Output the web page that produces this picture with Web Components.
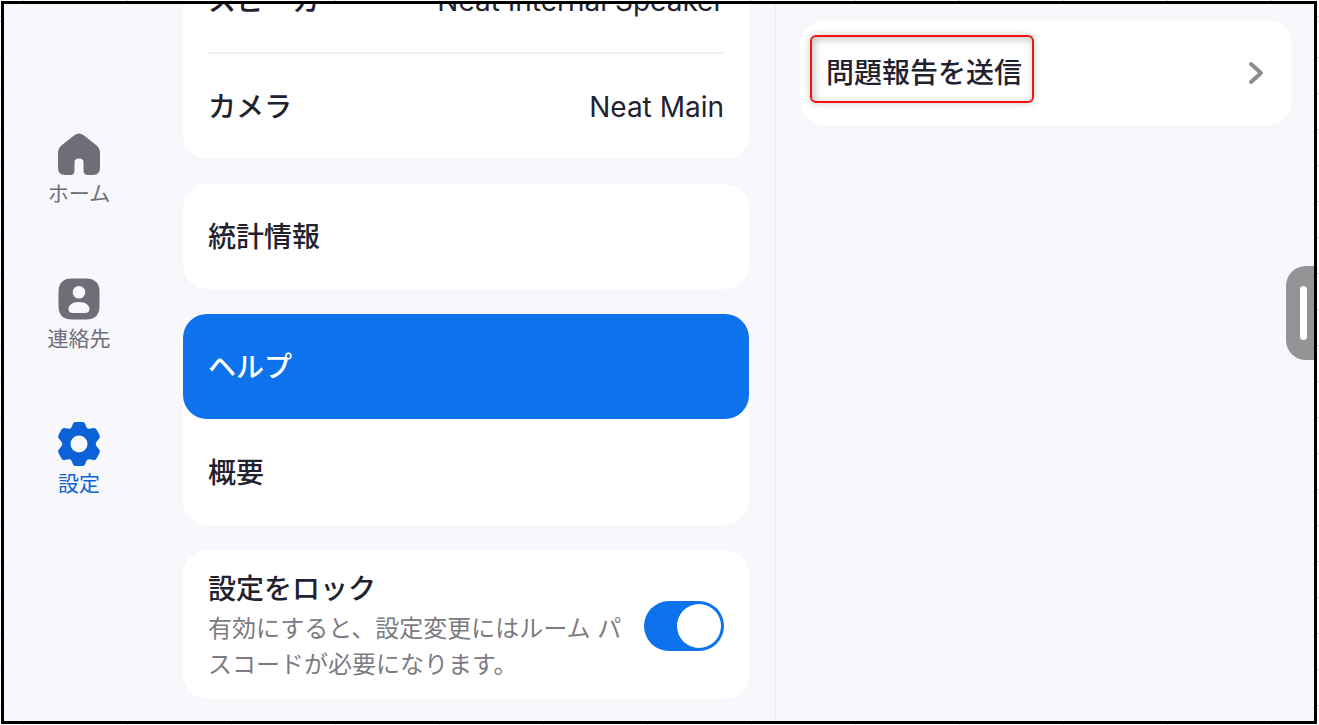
<!DOCTYPE html>
<html lang="ja">
<head>
<meta charset="utf-8">
<meta name="viewport" content="width=device-width, initial-scale=1">
<title>設定</title>
<style>
  :root {
    --bg: #f7f7fc;
    --card: #ffffff;
    --ink: #22222f;
    --muted: #7c7b82;
    --nav: #6e6d78;
    --blue: #0e72ed;
    --nav-active: #0b62d6;
    --line: #f1f1f4;
    --row: 105px;
    --radius: 24px;
  }
  body {
    margin: 0;
    overflow: hidden;
    font-family: Inter, "Noto Sans CJK JP", sans-serif;
    color: var(--ink);
    background:
      repeating-linear-gradient(to bottom, #d4d4d4 0 1px, transparent 1px 36px) 0 21px,
      repeating-linear-gradient(to right, #d4d4d4 0 1px, transparent 1px 104px) 23px 0,
      #fff;
  }
</style>
</head>
<body>
<room-settings>
  <side-nav slot="nav">
    <nav-item icon="home">ホーム</nav-item>
    <nav-item icon="contact">連絡先</nav-item>
    <nav-item icon="gear" active>設定</nav-item>
  </side-nav>
  <card-group slot="list">
    <setting-row value="Neat Internal Speaker">スピーカー</setting-row>
    <setting-row value="Neat Main" divided>カメラ</setting-row>
  </card-group>
  <card-group slot="list"><setting-row>統計情報</setting-row></card-group>
  <card-group slot="list">
    <setting-row selected>ヘルプ</setting-row>
    <setting-row>概要</setting-row>
  </card-group>
  <card-group slot="list">
    <toggle-row>設定をロック<span slot="hint">有効にすると、設定変更にはルーム パスコードが必要になります。</span></toggle-row>
  </card-group>
  <card-group slot="detail"><setting-row marked chevron>問題報告を送信</setting-row></card-group>
  <drawer-handle slot="handle"></drawer-handle>
</room-settings>

<script>
const attach = (el, html) => { el.attachShadow({ mode: 'open' }).innerHTML = html; };

customElements.define('room-settings', class extends HTMLElement {
  connectedCallback() {
    attach(this, `
      <style>
        :host {
          position: relative;
          display: grid;
          grid-template-columns: 154px minmax(0, 618fr) minmax(0, 538fr);
          box-sizing: border-box;
          height: calc(100vh - 2px);
          margin: 1px 2px 1px 1px;
          border: 3px solid #000;
          background: var(--bg);
          overflow: hidden;
        }
        main, aside { display: flex; flex-direction: column; gap: 25px; min-height: 0; overflow: hidden; }
        main { justify-content: flex-end; padding: 0 26px 22px 25px; border-right: 1px solid #e9e9f0; }
        aside { padding: 16px 22px 0 25px; }
      </style>
      <slot name="nav"></slot>
      <main><slot name="list"></slot></main>
      <aside><slot name="detail"></slot></aside>
      <slot name="handle"></slot>`);
  }
});

customElements.define('side-nav', class extends HTMLElement {
  connectedCallback() {
    attach(this, `
      <style>
        :host { display: block; border-right: 1px solid #f0f0f6; }
        nav { display: flex; flex-direction: column; gap: 68px; padding: 128px 3px 0 0; }
      </style>
      <nav><slot></slot></nav>`);
  }
});

const ICONS = {
  home: '<path fill-rule="evenodd" d="M17.600 3Q22 0 26.400 3L39 13Q43 16.200 43 20.500V36Q43 43 36 43H31Q26.500 43 26.500 38.500V30Q26.500 26.500 22 26.500T17.500 30V38.500Q17.500 43 13 43H8Q1 43 1 36V20.500Q1 16.200 5 13Z"/>',
  contact: '<path fill-rule="evenodd" d="M15 1.500H29Q42.500 1.500 42.500 15V29Q42.500 42.500 29 42.500H15Q1.500 42.500 1.500 29V15Q1.500 1.500 15 1.500ZM22 9A6.300 6.300 0 1 0 22 21.600A6.300 6.300 0 1 0 22 9ZM22 25C15 25 11.500 28.500 11.500 32Q11.500 36 16 36H28Q32.500 36 32.500 32C32.500 28.500 29 25 22 25Z"/>',
  gear: '<path fill-rule="evenodd" d="M18.500 0H25.500Q27.500 0 28.200 2L29.300 5Q30 7 32 6.700L36.500 6Q38.500 5.700 39.500 7.500L42.500 13Q43.500 14.800 42.200 16.400L39.500 19.700Q37.800 22 39.500 24.300L42.200 27.600Q43.500 29.200 42.500 31L39.500 36.500Q38.500 38.300 36.500 38L32.500 37.300Q30 37 29.300 39L28.200 42Q27.500 44 25.500 44H18.500Q16.500 44 15.800 42L14.700 39Q14 37 11.500 37.300L7.500 38Q5.500 38.300 4.500 36.500L1.500 31Q.5 29.200 1.800 27.600L4.500 24.300Q6.200 22 4.500 19.700L1.800 16.400Q.5 14.800 1.500 13L4.500 7.500Q5.500 5.700 7.500 6L12 6.700Q14 7 14.700 5L15.800 2Q16.500 0 18.500 0ZM22 13.500A8.500 8.500 0 1 0 22 30.500A8.500 8.500 0 1 0 22 13.500Z"/>'
};

customElements.define('nav-item', class extends HTMLElement {
  connectedCallback() {
    attach(this, `
      <style>
        :host { display: block; }
        a {
          display: flex; flex-direction: column; align-items: center; gap: 3px;
          color: var(--nav); text-decoration: none;
          font-size: 21px; line-height: 30px;
        }
        :host([active]) a { color: var(--nav-active); }
        svg { width: 44px; height: 44px; fill: currentColor; }
      </style>
      <a href="#${this.getAttribute('icon')}">
        <svg viewBox="0 0 44 44" aria-hidden="true">${ICONS[this.getAttribute('icon')]}</svg>
        <span><slot></slot></span>
      </a>`);
  }
});

customElements.define('card-group', class extends HTMLElement {
  connectedCallback() {
    attach(this, `
      <style>
        :host { display: grid; gap: 1px; flex: none; border-radius: var(--radius); background: var(--card); }
      </style>
      <slot></slot>`);
  }
});

customElements.define('setting-row', class extends HTMLElement {
  connectedCallback() {
    const value = this.getAttribute('value');
    attach(this, `
      <style>
        :host { display: block; }
        button {
          display: flex; align-items: center; justify-content: space-between;
          position: relative;
          width: 100%; height: var(--row); padding: 0 25px;
          border: 0; border-radius: var(--radius);
          background: none; color: inherit; text-align: left;
          font: 500 28px/40px Inter, "Noto Sans CJK JP", sans-serif;
        }
        :host([divided]) button::before {
          content: ""; position: absolute; inset: -2px 25px auto; height: 2px;
          background: var(--line);
        }
        :host([selected]) button { background: var(--blue); color: #fff; }
        .label { position: relative; white-space: nowrap; }
        :host([marked]) .label::after {
          content: ""; position: absolute; inset: -18px -12px -10px -16px;
          border: 2px solid #f5120f; border-radius: 6px;
          box-shadow: 0 0 8px rgba(0, 0, 0, .2), inset 2px 2px 8px rgba(0, 0, 0, .25);
        }
        .value { font-weight: 400; white-space: nowrap; }
        svg { width: 16px; height: 24px; margin-right: 3px; fill: none; stroke: #8d8d8d; stroke-width: 4; stroke-linecap: round; stroke-linejoin: round; }
      </style>
      <button type="button">
        <span class="label"><slot></slot></span>
        ${value ? `<span class="value">${value}</span>` : ''}
        ${this.hasAttribute('chevron') ? '<svg viewBox="0 0 16 24" aria-hidden="true"><path d="M3 3L13 12L3 21"/></svg>' : ''}
      </button>`);
  }
});

customElements.define('toggle-row', class extends HTMLElement {
  connectedCallback() {
    attach(this, `
      <style>
        :host { display: flex; align-items: center; gap: 10px; padding: 19px 25px 16px; }
        label { flex: 1; min-width: 0; }
        .title { display: block; font-weight: 500; font-size: 28px; line-height: 40px; }
        .hint { display: block; margin-top: 2px; color: var(--muted); font-size: 24px; line-height: 36px; }
        input {
          appearance: none; flex: none;
          display: flex; justify-content: flex-end; align-items: center;
          box-sizing: border-box;
          width: 80px; height: 50px; margin: 0; padding: 0 3px;
          border-radius: 25px; background: #b8b8c0;
        }
        input::before { content: ""; width: 44px; height: 44px; border-radius: 50%; background: #fff; }
        input:checked { background: var(--blue); }
        input:not(:checked) { justify-content: flex-start; }
      </style>
      <label for="lock">
        <span class="title"><slot></slot></span>
        <span class="hint"><slot name="hint"></slot></span>
      </label>
      <input id="lock" type="checkbox" role="switch" checked>`);
  }
});

customElements.define('drawer-handle', class extends HTMLElement {
  connectedCallback() {
    attach(this, `
      <style>
        :host { position: absolute; right: 0; top: 262px; }
        button {
          display: flex; align-items: center; justify-content: flex-end;
          width: 28px; height: 94px; padding: 0 7px 0 0;
          border: 0; border-radius: 20px 0 0 20px; background: #949496;
        }
        span { width: 7px; height: 54px; border-radius: 4px; background: #fff; }
      </style>
      <button type="button" aria-label="パネルを開く"><span></span></button>`);
  }
});
</script>
</body>
</html>
